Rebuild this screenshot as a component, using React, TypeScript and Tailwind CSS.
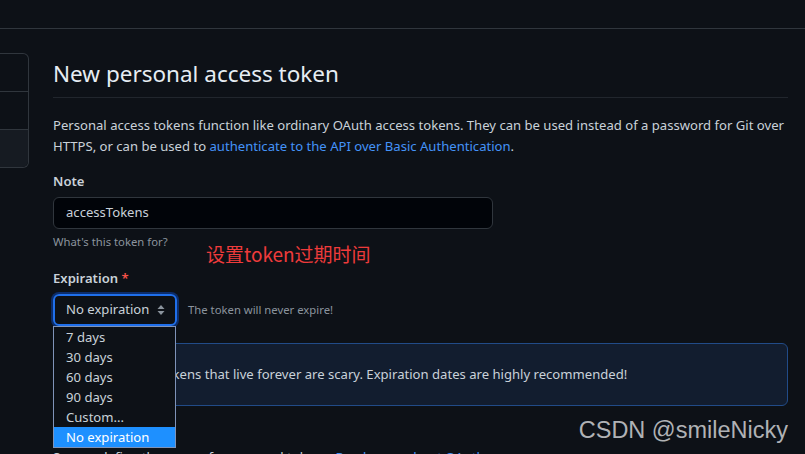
import { FC } from 'react';

const options = ['7 days', '30 days', '60 days', '90 days', 'Custom...', 'No expiration'];

const App: FC = () => {
    return (
        <div
            className="relative w-[805px] h-[454px] overflow-hidden bg-[#0d1117] text-[#c9d1d9]"
            style={{ fontFamily: '"Segoe UI", "Noto Sans", "Noto Sans CJK SC", sans-serif' }}
        >
            <div className="h-[29px] border-b border-[#30363d]" />
            <div className="flex gap-6 pt-6">
                {/* sidebar, mostly off screen */}
                <div className="w-[29px] shrink-0 self-start rounded-r-md border-y border-r border-[#30363d]">
                    <div className="h-[38px] border-b border-[#30363d]" />
                    <div className="h-[38px] border-b border-[#30363d]" />
                    <div className="h-[37px] rounded-br-md bg-[#161b22]" />
                </div>

                <section className="w-[735px] pt-[3px]">
                    <h1 className="border-b border-[#21262d] pb-[5px] text-[22.5px] leading-[36px] font-normal text-[#e6edf3]">
                        New personal access token
                    </h1>
                    <p className="mt-[17px] text-[13.1px] leading-[21px]">
                        Personal access tokens function like ordinary OAuth access tokens. They can be used
                        instead of a password for Git over HTTPS, or can be used to{' '}
                        <a className="text-[#4493f8]">authenticate to the API over Basic Authentication</a>.
                    </p>

                    <label className="mt-[14px] block text-[13.1px] leading-[21px] font-semibold">Note</label>
                    <div className="mt-[5px] flex h-[32px] w-[440px] items-center rounded-md border border-[#30363d] bg-[#010409] px-3 text-[13.1px]">
                        accessTokens
                    </div>
                    <p className="mt-[4px] text-[11.3px] leading-[18px] text-[#8b949e]">What&apos;s this token for?</p>

                    <label className="mt-[17px] block text-[13.1px] leading-[21px] font-semibold">
                        Expiration <span className="text-[#f85149]">*</span>
                    </label>
                    <div className="relative mt-[5px] flex items-center gap-[11px]">
                        <div className="flex h-[32px] w-[124px] items-center justify-between rounded-md border-2 border-[#1f6feb] pl-[11px] pr-[10px] text-[13.1px] shadow-[0_0_0_2px_#0c2d6b]">
                            <span>No expiration</span>
                            <svg width="8" height="12" viewBox="0 0 8 12" fill="#8b949e">
                                <path d="M4 1 L7.5 5 H0.5 Z" />
                                <path d="M4 11 L7.5 7 H0.5 Z" />
                            </svg>
                        </div>
                        <span className="text-[11.3px] text-[#8b949e]">The token will never expire!</span>

                        <ul className="absolute left-0 top-[32px] z-10 w-[123px] border border-[#7f93b8] bg-[#0d1117] text-[13.1px]">
                            {options.map((o) => (
                                <li
                                    className={
                                        o === 'No expiration'
                                            ? 'h-[20px] pl-[12px] leading-[20px] bg-[#1e90ff] text-white'
                                            : 'h-[20px] pl-[12px] leading-[20px]'
                                    }
                                >
                                    {o}
                                </li>
                            ))}
                        </ul>
                    </div>

                    <div className="mt-[17px] flex h-[63px] items-center rounded-md border border-[#214b88] bg-[#121d2f] pl-[39px] text-[13.1px]">
                        Heads up! Tokens that live forever are scary. Expiration dates are highly recommended!
                    </div>

                    <p className="mt-[41px] text-[13.1px] leading-[21px]">
                        Scopes define the access for personal tokens.{' '}
                        <a className="text-[#4493f8]">Read more about OAuth scopes.</a>
                    </p>
                </section>
            </div>

            {/* annotation */}
            <span
                className="absolute left-[206px] top-[242px] text-[19px] leading-[24px] text-[#ee3b3b]"
                style={{ fontFamily: '"Noto Sans CJK SC", sans-serif' }}
            >
                设置token过期时间
            </span>

            {/* watermark */}
            <span
                className="absolute right-[17px] top-[415px] text-[23.5px] leading-[30px] text-[#b0b2b5]"
                style={{ fontFamily: '"Liberation Sans", Arial, sans-serif' }}
            >
                CSDN @smileNicky
            </span>
        </div>
    );
};
export default App;
